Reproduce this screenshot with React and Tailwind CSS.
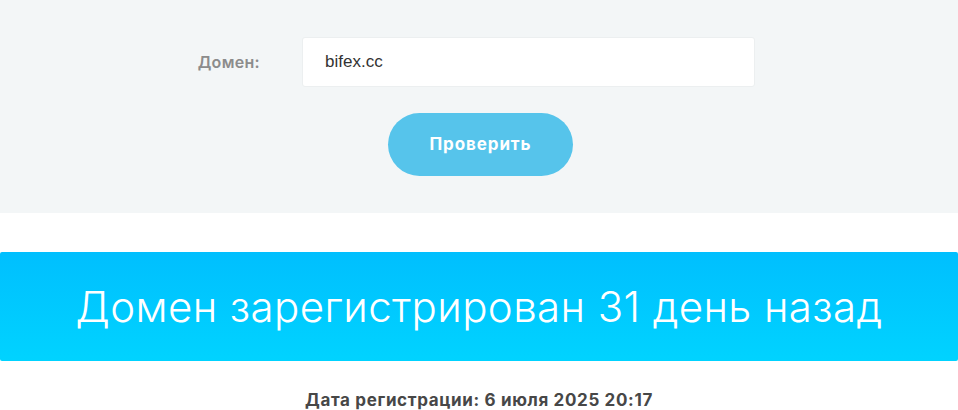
import React, { useState } from 'react';

const App = () => {
    const [domain, setDomain] = useState('bifex.cc');

    return (
        <div className="w-full min-h-[410px] bg-white font-['Inter',sans-serif]">
            <div className="bg-[#f3f6f7] h-[213px] pt-[37px]">
                <div className="flex items-center">
                    <label className="w-[260px] text-right text-[16px] font-semibold text-[#8c8c8c] tracking-[0.3px] -mt-[1px]">
                        Домен:
                    </label>
                    <input
                        type="text"
                        value={domain}
                        onChange={(e) => setDomain(e.target.value)}
                        className="ml-[42px] w-[453px] h-[50px] bg-white border border-[#eceff0] rounded-[3px] px-[22px] text-[17px] text-[#333] font-['Liberation_Sans',sans-serif] outline-none"
                    />
                </div>
                <div className="flex justify-center mt-[26px] pl-[3px]">
                    <button className="w-[185px] h-[63px] rounded-full bg-[#56c4eb] text-white text-[17px] font-bold tracking-[0.9px]">
                        Проверить
                    </button>
                </div>
            </div>

            <div className="mt-[39px] h-[109px] rounded-[2px] bg-gradient-to-b from-[#00bffe] to-[#00d3ff] flex items-center justify-center">
                <h1 className="text-[42px] font-light text-white tracking-[0.4px]">
                    Домен зарегистрирован 31 день назад
                </h1>
            </div>

            <div className="flex justify-center pt-[27px]">
                <p className="text-[17px] font-bold text-[#474747] tracking-[0.65px]">
                    Дата регистрации: 6 июля 2025 20:17
                </p>
            </div>
        </div>
    );
};

export default App;
